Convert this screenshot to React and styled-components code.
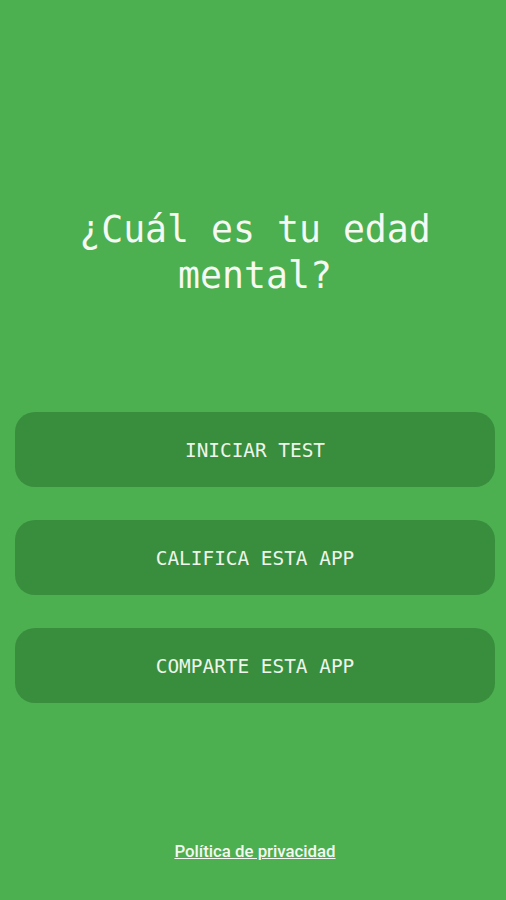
import React from 'react';
import styled, { createGlobalStyle } from 'styled-components';

const GlobalStyle = createGlobalStyle`
  html, body {
    margin: 0;
    padding: 0;
    background: #4caf50;
  }
`;

const Page = styled.div`
  width: 100%;
  height: 900px;
  box-sizing: border-box;
  background: #4caf50;
  display: flex;
  flex-direction: column;
  padding: 0 11px 39px 15px;
`;

const Title = styled.h1`
  margin: 207px 0 0;
  font-family: "DejaVu Sans Mono", monospace;
  font-weight: 400;
  font-size: 36.5px;
  line-height: 46px;
  color: #f6f8f4;
  text-align: center;
`;

const Buttons = styled.div`
  margin-top: 113px;
  display: flex;
  flex-direction: column;
  gap: 33px;
`;

const Button = styled.button`
  height: 75px;
  width: 100%;
  border: none;
  border-radius: 20px;
  background: #388e3c;
  color: #eef5ea;
  font-family: "DejaVu Sans Mono", monospace;
  font-size: 19.4px;
  padding: 2px 0 0;
  cursor: pointer;
`;

const Footer = styled.div`
  margin-top: auto;
  text-align: center;
`;

const Link = styled.a`
  font-family: Roboto, "Liberation Sans", sans-serif;
  font-weight: 500;
  font-size: 16.8px;
  line-height: 20px;
  color: #f4f8f2;
  text-decoration: underline;
  cursor: pointer;
`;

export default function App() {
  return (
    <>
      <GlobalStyle />
      <Page>
        <Title>¿Cuál es tu edad<br />mental?</Title>
        <Buttons>
          <Button>INICIAR TEST</Button>
          <Button>CALIFICA ESTA APP</Button>
          <Button>COMPARTE ESTA APP</Button>
        </Buttons>
        <Footer>
          <Link>Política de privacidad</Link>
        </Footer>
      </Page>
    </>
  );
}
